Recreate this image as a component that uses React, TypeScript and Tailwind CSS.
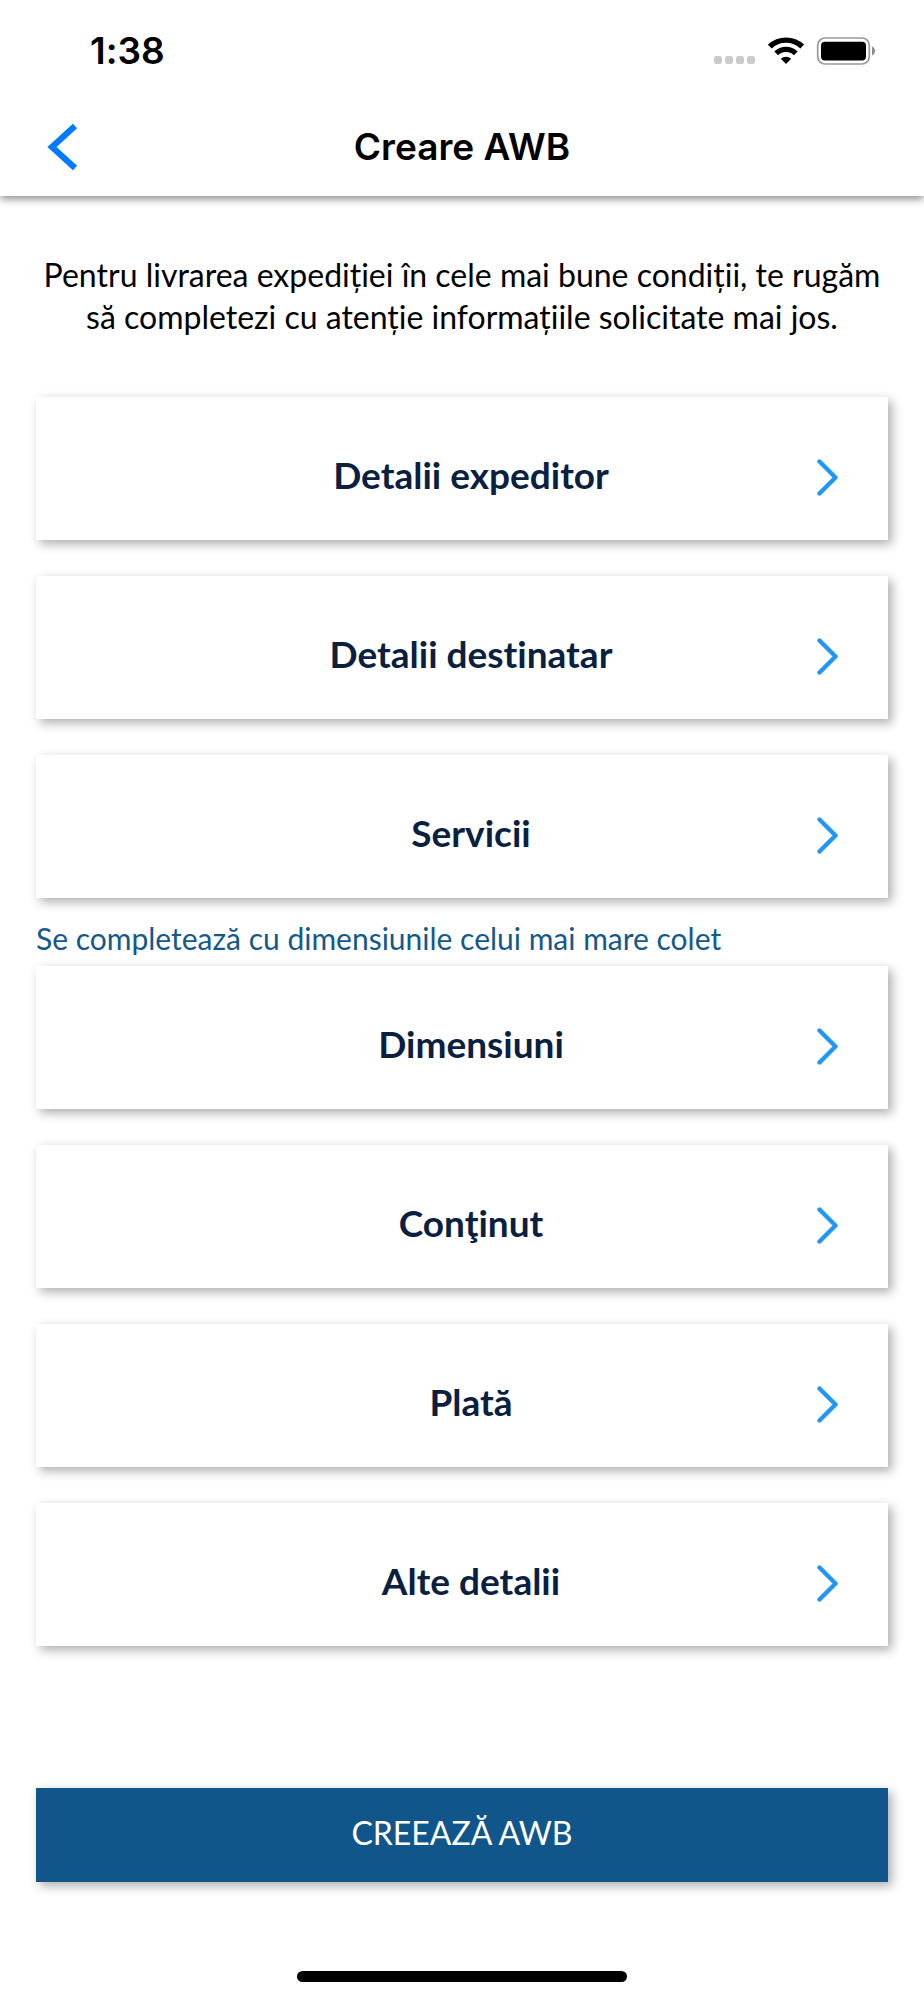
import { ReactNode } from 'react'

type Section = {
  id: string
  title: string
  note?: string
}

const SECTIONS: Section[] = [
  { id: 'sender', title: 'Detalii expeditor' },
  { id: 'recipient', title: 'Detalii destinatar' },
  { id: 'services', title: 'Servicii' },
  { id: 'dimensions', title: 'Dimensiuni', note: 'Se completează cu dimensiunile celui mai mare colet' },
  { id: 'content', title: 'Conţinut' },
  { id: 'payment', title: 'Plată' },
  { id: 'other', title: 'Alte detalii' },
]

function StatusBar() {
  return (
    <div className="flex h-[98px] items-center justify-between pl-[90px] pr-[48px] pt-1">
      <span className="text-[37px] font-semibold leading-[42px]">1:38</span>
      <div className="flex items-center">
        <svg width="42" height="28" viewBox="0 0 42 28" fill="#cbcbcb" aria-hidden="true">
          <rect x="0" y="19" width="8" height="8" rx="2.5" />
          <rect x="11" y="19" width="8" height="8" rx="2.5" />
          <rect x="22" y="19" width="8" height="8" rx="2.5" />
          <rect x="33" y="19" width="8" height="8" rx="2.5" />
        </svg>
        <svg className="ml-3" width="36" height="28" viewBox="0 0 36 28" aria-hidden="true">
          <path d="M1.8 9.6 A23.5 23.5 0 0 1 34.2 9.6" fill="none" stroke="#000" strokeWidth="5.4" />
          <path d="M8.2 16.4 A14 14 0 0 1 27.8 16.4" fill="none" stroke="#000" strokeWidth="5.4" />
          <path d="M12.8 21.8 A7.8 7.8 0 0 1 23.2 21.8 L18 27 Z" />
        </svg>
        <svg className="ml-3" width="60" height="28" viewBox="0 0 60 28" aria-hidden="true">
          <rect x="1.7" y="1" width="51.6" height="26" rx="7.5" fill="none" stroke="#999" strokeWidth="1.7" />
          <rect x="5" y="4.7" width="45" height="18.8" rx="4" />
          <path d="M56 9.5 Q59 10.8 59 14 Q59 17.2 56 18.5 Z" fill="#8c8c8c" />
        </svg>
      </div>
    </div>
  )
}

function Header({ children }: { children: ReactNode }) {
  return (
    <header className="bg-white font-[Inter,sans-serif] text-black shadow-[0_3px_8px_rgba(0,0,0,0.45)]">
      <StatusBar />
      <div className="grid h-[98px] grid-cols-[1fr_auto_1fr] items-center">
        <button type="button" aria-label="Înapoi" className="ml-[46px] w-fit">
          <svg width="34" height="48" viewBox="0 0 34 48" aria-hidden="true">
            <path d="M29 3 L6 24 L29 45" fill="none" stroke="#007aff" strokeWidth="6.2" />
          </svg>
        </button>
        <h1 className="text-[37px] font-semibold leading-[44px]">{children}</h1>
      </div>
    </header>
  )
}

function SectionButton({ title }: { title: string }) {
  return (
    <button
      type="button"
      className="flex h-[143px] w-full items-center bg-white pl-[106px] pt-3 shadow-[4px_4px_10px_rgba(0,0,0,0.32)]"
    >
      <span className="flex-1 text-center text-[37px] font-bold leading-[44px] text-[#0b1f41]">{title}</span>
      <span className="w-[88px] pl-3">
        <svg width="28" height="42" viewBox="0 0 28 42" aria-hidden="true">
          <path
            d="M7.5 7.5 L23.5 23.5 L7.5 39.5"
            fill="none"
            stroke="#2196f3"
            strokeWidth="4.4"
            strokeLinecap="round"
            strokeLinejoin="round"
          />
        </svg>
      </span>
    </button>
  )
}

export default function App() {
  return (
    <div className="flex min-h-screen flex-col bg-white font-[Lato,sans-serif] [font-variant-ligatures:none]">
      <Header>Creare AWB</Header>

      <main className="px-9 pt-[58px]">
        <p className="text-center text-[32px] leading-[42px] text-black">
          Pentru livrarea expediției în cele mai bune condiții, te rugăm să completezi cu atenție informațiile
          solicitate mai jos.
        </p>

        <ul className="mt-[59px]">
          {SECTIONS.map((section) => (
            <li key={section.id} className="mb-9">
              {section.note && (
                <p className="-mt-4 mb-2 text-[30px] leading-[40px] text-[#14598c]">{section.note}</p>
              )}
              <SectionButton title={section.title} />
            </li>
          ))}
        </ul>

        <button
          type="button"
          className="mt-[106px] h-[94px] w-full bg-[#10568a] pb-1 text-[32px] leading-[40px] text-white shadow-[4px_4px_10px_rgba(0,0,0,0.32)]"
        >
          CREEAZĂ AWB
        </button>
      </main>

      {/* Home indicator */}
      <div className="mx-auto mb-[18px] mt-auto h-[11px] w-[330px] rounded-full bg-black" />
    </div>
  )
}
